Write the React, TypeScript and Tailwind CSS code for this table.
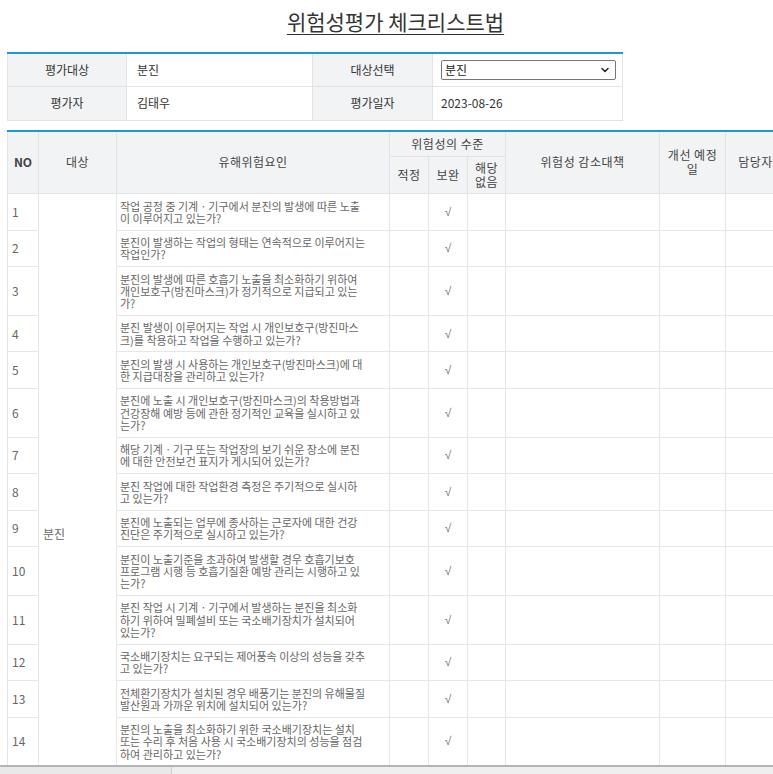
import React from "react";
import { ChevronDown } from "lucide-react";

// -------------------------------------------
// -------------------------------------------

const ROWS: string[][] = [
  ["작업 공정 중 기계ㆍ기구에서 분진의 발생에 따른 노출", "이 이루어지고 있는가?"],
  ["분진이 발생하는 작업의 형태는 연속적으로 이루어지는", "작업인가?"],
  ["분진의 발생에 따른 호흡기 노출을 최소화하기 위하여", "개인보호구(방진마스크)가 정기적으로 지급되고 있는", "가?"],
  ["분진 발생이 이루어지는 작업 시 개인보호구(방진마스", "크)를 착용하고 작업을 수행하고 있는가?"],
  ["분진의 발생 시 사용하는 개인보호구(방진마스크)에 대", "한 지급대장을 관리하고 있는가?"],
  ["분진에 노출 시 개인보호구(방진마스크)의 착용방법과", "건강장해 예방 등에 관한 정기적인 교육을 실시하고 있", "는가?"],
  ["해당 기계ㆍ기구 또는 작업장의 보기 쉬운 장소에 분진", "에 대한 안전보건 표지가 게시되어 있는가?"],
  ["분진 작업에 대한 작업환경 측정은 주기적으로 실시하", "고 있는가?"],
  ["분진에 노출되는 업무에 종사하는 근로자에 대한 건강", "진단은 주기적으로 실시하고 있는가?"],
  ["분진이 노출기준을 초과하여 발생할 경우 호흡기보호", "프로그램 시행 등 호흡기질환 예방 관리는 시행하고 있", "는가?"],
  ["분진 작업 시 기계ㆍ기구에서 발생하는 분진을 최소화", "하기 위하여 밀폐설비 또는 국소배기장치가 설치되어", "있는가?"],
  ["국소배기장치는 요구되는 제어풍속 이상의 성능을 갖추", "고 있는가?"],
  ["전체환기장치가 설치된 경우 배풍기는 분진의 유해물질", "발산원과 가까운 위치에 설치되어 있는가?"],
  ["분진의 노출을 최소화하기 위한 국소배기장치는 설치", "또는 수리 후 처음 사용 시 국소배기장치의 성능을 점검", "하여 관리하고 있는가?"],
  ["분진 작업장의 바닥 및 설비 등은 청결하게 유지·관리", "되고 있는가?"],
  ["분진 작업에 대한 작업표준 및 안전수칙이 마련되어", "있는가?"],
  ["분진 발생 설비에 대한 정기적인 점검 및 보수를 실시", "하고 있는가?"],
];

const HEAD =
  "border border-[#e2e3e5] bg-[#f2f3f5] text-center align-middle text-[12px] font-normal leading-[14px] tracking-[0.5px] text-[#444]";
const CELL = "border border-[#e6e6e6] align-middle text-[#666]";
const INFO_LABEL = "border border-[#e3e3e3] bg-[#f2f3f5] text-center align-middle text-[12px] text-[#333]";
const INFO_VALUE = "border border-[#e3e3e3] bg-white px-[10px] align-middle text-[12px] text-[#333]";

// -------------------------------------------
// Page
// -------------------------------------------

export default function App() {
  return (
    <div className="flex h-[774px] flex-col overflow-hidden bg-white font-['Noto_Sans_CJK_KR','Noto_Sans',sans-serif] text-[#333]">
      <div className="flex-1 overflow-hidden">
        {/* Title */}
        <h1 className="mt-[9px] pl-[18px] text-center text-[21px] leading-[25px] font-normal text-[#333] underline decoration-1 underline-offset-[4px]">
          위험성평가 체크리스트법
        </h1>

        {/* Evaluation info */}
        <table className="mt-[18px] ml-[7px] w-[615px] table-fixed border-collapse border-t-2 border-t-[#1b98d5]">
          <colgroup>
            <col className="w-[119px]" />
            <col className="w-[186px]" />
            <col className="w-[120px]" />
            <col className="w-[190px]" />
          </colgroup>
          <tbody>
            <tr className="h-[33px]">
              <td className={INFO_LABEL}>평가대상</td>
              <td className={INFO_VALUE}>분진</td>
              <td className={INFO_LABEL}>대상선택</td>
              <td className={`${INFO_VALUE} pl-[8px]`}>
                <div className="relative w-[175px]">
                  <select
                    defaultValue="분진"
                    className="block h-[20px] w-full appearance-none rounded-[2px] border border-[#767676] bg-white pl-[3px] text-[12px] leading-[18px] text-[#222]"
                  >
                    <option>분진</option>
                    <option>소음</option>
                    <option>진동</option>
                  </select>
                  <ChevronDown
                    size={12}
                    strokeWidth={3}
                    className="pointer-events-none absolute top-[4px] right-[5px] text-[#222]"
                  />
                </div>
              </td>
            </tr>
            <tr className="h-[34px]">
              <td className={INFO_LABEL}>평가자</td>
              <td className={INFO_VALUE}>김태우</td>
              <td className={INFO_LABEL}>평가일자</td>
              <td className={`${INFO_VALUE} pl-[8px]`}>2023-08-26</td>
            </tr>
          </tbody>
        </table>

        {/* Checklist */}
        <table className="mt-[9px] ml-[7px] w-[778px] table-fixed border-collapse border-t-2 border-t-[#1b98d5]">
          <colgroup>
            <col className="w-[31px]" />
            <col className="w-[78px]" />
            <col className="w-[273px]" />
            <col className="w-[39px]" />
            <col className="w-[39px]" />
            <col className="w-[38px]" />
            <col className="w-[154px]" />
            <col className="w-[66px]" />
            <col className="w-[60px]" />
          </colgroup>
          <thead>
            <tr className="h-[26px]">
              <th rowSpan={2} className={`${HEAD} font-semibold tracking-normal`}>
                NO
              </th>
              <th rowSpan={2} className={HEAD}>
                대상
              </th>
              <th rowSpan={2} className={HEAD}>
                유해위험요인
              </th>
              <th colSpan={3} className={HEAD}>
                위험성의 수준
              </th>
              <th rowSpan={2} className={HEAD}>
                위험성 감소대책
              </th>
              <th rowSpan={2} className={`${HEAD} px-[4px]`}>
                개선 예정일
              </th>
              <th rowSpan={2} className={HEAD}>
                담당자
              </th>
            </tr>
            <tr className="h-[37px]">
              <th className={HEAD}>적정</th>
              <th className={HEAD}>보완</th>
              <th className={`${HEAD} px-[6px]`}>해당없음</th>
            </tr>
          </thead>
          <tbody>
            {ROWS.map((lines, i) => (
              <tr key={i}>
                <td className={`${CELL} px-[4px] text-[12px]`}>{i + 1}</td>
                {i === 0 && (
                  <td rowSpan={ROWS.length} className={`${CELL} px-[4px] text-[12px]`}>
                    분진
                  </td>
                )}
                <td className={`${CELL} overflow-hidden px-[3px] py-[5.5px] text-[11px] leading-[12.25px]`}>
                  {lines.map((l, j) => (
                    <div key={j} className="whitespace-nowrap">
                      {l}
                    </div>
                  ))}
                </td>
                <td className={CELL}></td>
                <td className={`${CELL} text-center font-['Liberation_Sans',sans-serif] text-[12px] text-[#777]`}>√</td>
                <td className={CELL}></td>
                <td className={CELL}></td>
                <td className={CELL}></td>
                <td className={CELL}></td>
              </tr>
            ))}
          </tbody>
        </table>
      </div>

      {/* Horizontal scrollbar of the window */}
      <div className="flex h-[9px] border-t-2 border-t-[#b4b4b4] bg-[#efefef]">
        <div className="h-full w-[172px] border-r border-r-[#cfcfcf] bg-[#e9e9e9]" />
      </div>
    </div>
  );
}
